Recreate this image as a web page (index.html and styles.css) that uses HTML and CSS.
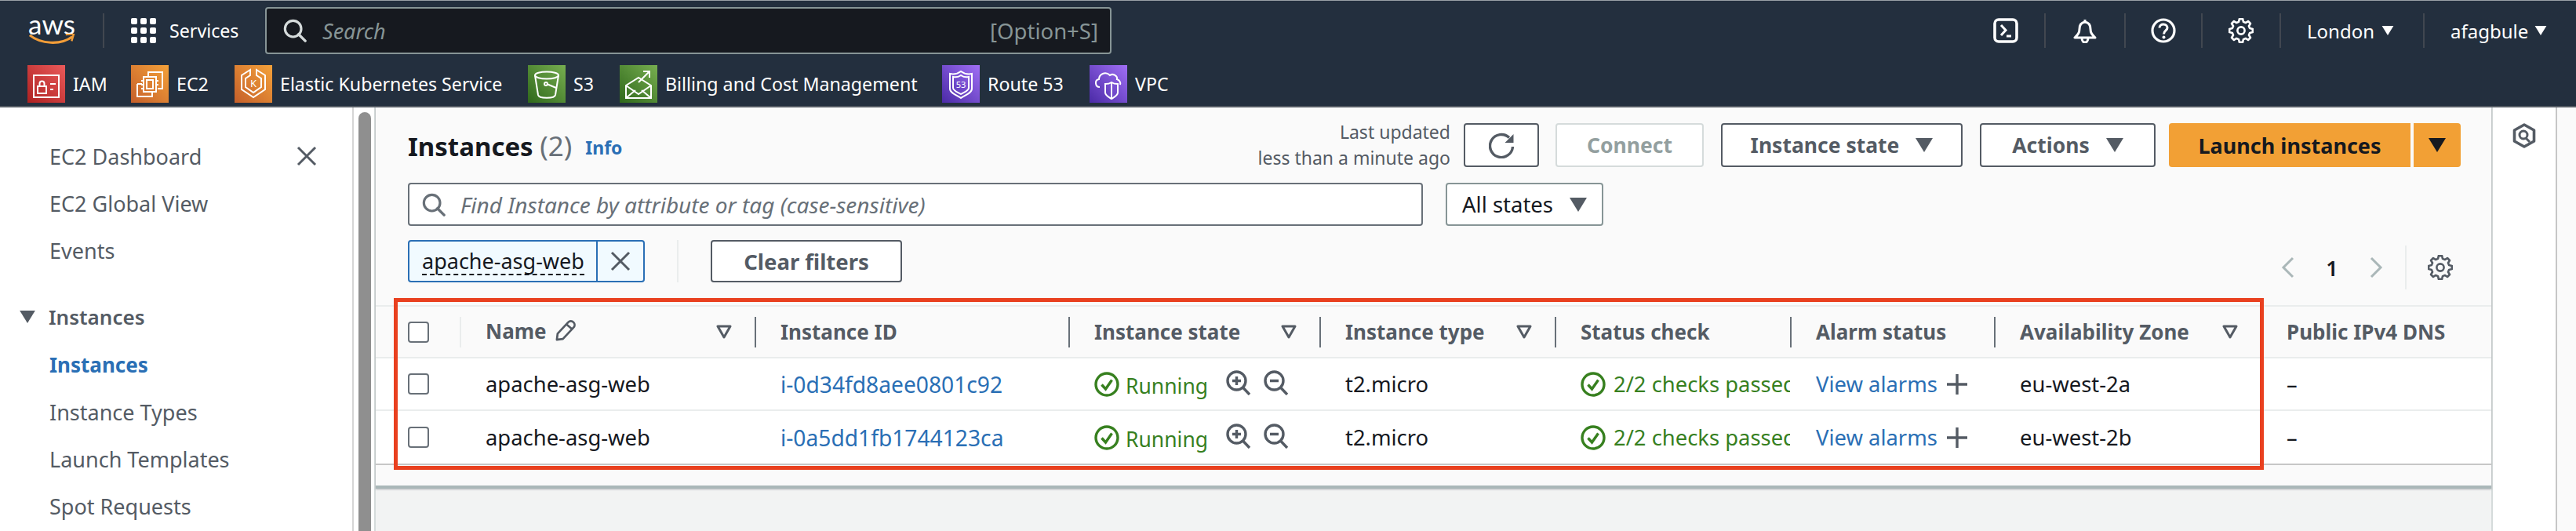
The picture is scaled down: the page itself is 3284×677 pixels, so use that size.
FILE: index.html
```html
<!DOCTYPE html>
<html lang="en">
<head>
<meta charset="utf-8">
<title>Instances | EC2</title>
<link rel="stylesheet" href="styles.css">
</head>
<body>
<svg class="sprite" aria-hidden="true">
  <symbol id="gear" viewBox="-16 -16 32 32"><polygon points="14.85,-2.1 14.85,2.1 11.1,3 9.96,5.75 11.98,9.03 9.03,11.98 5.75,9.96 3,11.1 2.1,14.85 -2.1,14.85 -3,11.1 -5.75,9.96 -9.03,11.98 -11.98,9.03 -9.96,5.75 -11.1,3 -14.85,2.1 -14.85,-2.1 -11.1,-3 -9.96,-5.75 -11.98,-9.03 -9.03,-11.98 -5.75,-9.96 -3,-11.1 -2.1,-14.85 2.1,-14.85 3,-11.1 5.75,-9.96 9.03,-11.98 11.98,-9.03 9.96,-5.75 11.1,-3" fill="none" stroke="currentColor" stroke-width="2.6" stroke-linejoin="round"/><circle r="4.6" fill="none" stroke="currentColor" stroke-width="2.6"/></symbol>
  <symbol id="caret" viewBox="0 0 16 13"><path d="M0 0H16L8 13Z" fill="currentColor"/></symbol>
  <symbol id="sort" viewBox="0 0 20 18"><path d="M2 2H18L10 16Z" fill="none" stroke="currentColor" stroke-width="3" stroke-linejoin="round"/></symbol>
  <symbol id="mag" viewBox="0 0 32 32"><circle cx="13.5" cy="13.5" r="11" fill="none" stroke="currentColor" stroke-width="3.4"/><path d="M21 21L30 30" stroke="currentColor" stroke-width="3.6" stroke-linecap="round"/></symbol>
  <symbol id="close" viewBox="0 0 26 26"><path d="M2 2L24 24M24 2L2 24" stroke="currentColor" stroke-width="3"/></symbol>
  <symbol id="check" viewBox="0 0 32 32"><circle cx="16" cy="16" r="14" fill="none" stroke="currentColor" stroke-width="3.4"/><path d="M9.5 16.5L14.5 22L22.5 10.5" fill="none" stroke="currentColor" stroke-width="3.4"/></symbol>
  <symbol id="zoomin" viewBox="0 0 32 32"><circle cx="13.5" cy="13.5" r="11.5" fill="none" stroke="currentColor" stroke-width="3.4"/><path d="M21.5 22L30 31M13.5 8V19M8 13.5H19" stroke="currentColor" stroke-width="3.4"/></symbol>
  <symbol id="zoomout" viewBox="0 0 32 32"><circle cx="13.5" cy="13.5" r="11.5" fill="none" stroke="currentColor" stroke-width="3.4"/><path d="M21.5 22L30 31M8 13.5H19" stroke="currentColor" stroke-width="3.4"/></symbol>
</svg>

<header class="topnav">
  <div class="nav-main">
    <div class="aws-logo"><span class="aws-word">aws</span><svg class="aws-smile" viewBox="0 0 62 16"><path d="M1 2C16 14 43 16 59 4" fill="none" stroke="#f29d38" stroke-width="3.400"/><path d="M50 1L61 0L58 10" fill="none" stroke="#f29d38" stroke-width="2.600"/></svg></div>
    <span class="nav-rule"></span>
    <div class="services">
      <div class="dots"><i></i><i></i><i></i><i></i><i></i><i></i><i></i><i></i><i></i></div>
      <span>Services</span>
    </div>
    <div class="global-search">
      <svg class="global-search-icon"><use href="#mag"/></svg>
      <span class="global-search-text">Search</span>
      <span class="shortcut">[Option+S]</span>
    </div>
    <div class="utilities">
      <div class="util"><svg class="util-icon" viewBox="0 0 32 32"><rect x="2" y="2" width="28" height="28" rx="5" fill="none" stroke="currentColor" stroke-width="3.6"/><path d="M10 9L16 15.5L10 22M17 23H23" fill="none" stroke="currentColor" stroke-width="3"/></svg></div>
      <div class="util"><svg class="util-icon" viewBox="0 0 32 32"><path d="M16 2C16 2 16 4 16 5C10 6 9 10 9 14C9 19 7 21 3 25H29C25 21 23 19 23 14C23 10 22 6 16 5M12 25C12 29 14 31 16 31C18 31 20 29 20 25" fill="none" stroke="currentColor" stroke-width="3" stroke-linejoin="round"/></svg></div>
      <div class="util"><svg class="util-icon" viewBox="0 0 32 32"><circle cx="16" cy="16" r="14" fill="none" stroke="currentColor" stroke-width="3.2"/><path d="M11 12.5C11 9.500 13.500 8 16 8C19 8 21 10 21 12.500C21 16 16.500 16 16.500 20.500" fill="none" stroke="currentColor" stroke-width="3"/><circle cx="16.500" cy="24.500" r="2" fill="currentColor"/></svg></div>
      <div class="util"><svg class="util-icon"><use href="#gear"/></svg></div>
      <div class="util util-text"><span class="util-label">London</span><svg class="util-caret"><use href="#caret"/></svg></div>
      <div class="util util-text util-last"><span class="util-label">afagbule</span><svg class="util-caret"><use href="#caret"/></svg></div>
    </div>
  </div>
  <nav class="favorites">
    <a class="fav"><svg class="fav-icon fav-red" viewBox="0 0 48 48"><g fill="none" stroke="#fff" stroke-width="2"><rect x="8" y="13" width="32" height="28"/><rect x="13" y="27" width="11" height="9"/><path d="M15.500 27V23.500C15.500 19.500 21.500 19.500 21.500 23.500V27M29 24H36M29 31H33"/></g></svg><span>IAM</span></a>
    <a class="fav"><svg class="fav-icon fav-orange" viewBox="0 0 48 48"><g fill="none" stroke="#fff" stroke-width="2"><path d="M22 15V9H40V30H34M8 24H14M27 34V40H8V24"/><rect x="16" y="15" width="16" height="19"/><path d="M20 19H28V30H20Z M13 20H16M13 25H16M13 30H16M32 20H35M32 25H35"/></g></svg><span>EC2</span></a>
    <a class="fav"><svg class="fav-icon fav-orange" viewBox="0 0 48 48"><g fill="none" stroke="#fff" stroke-width="2"><path d="M20 6L9 13V31L24 41L39 31V13L28 6V13L34 17V28L24 35L14 28V17L20 13Z"/><text x="24" y="28" text-anchor="middle" class="icon-label" fill="#fff" stroke="none">K</text></g></svg><span>Elastic Kubernetes Service</span></a>
    <a class="fav"><svg class="fav-icon fav-green" viewBox="0 0 48 48"><g fill="none" stroke="#fff" stroke-width="2"><ellipse cx="24" cy="13" rx="15" ry="4.500"/><path d="M9 13L13 38C14 43 34 43 35 38L39 13M24 24L36 29"/><circle cx="23" cy="24" r="2"/></g></svg><span>S3</span></a>
    <a class="fav"><svg class="fav-icon fav-green" viewBox="0 0 48 48"><g fill="none" stroke="#fff" stroke-width="2"><path d="M8 26V42H40V26L24 16ZM8 42L20 32M40 42L28 32M8 26L24 37L40 26M24 22L38 8M30 8H38V16"/></g></svg><span>Billing and Cost Management</span></a>
    <a class="fav"><svg class="fav-icon fav-purple" viewBox="0 0 48 48"><g fill="none" stroke="#fff" stroke-width="2"><path d="M24 8C20 11 15 12 10 11V30C10 36 20 39 24 42C28 39 38 36 38 30V11C33 12 28 11 24 8Z"/><path d="M24 13C21 15 18 16 14 15V29C14 33 21 35 24 37C27 35 34 33 34 29V15C30 16 27 15 24 13Z"/><text x="24" y="29" text-anchor="middle" class="icon-label icon-label-sm" fill="#fff" stroke="none">53</text></g></svg><span>Route 53</span></a>
    <a class="fav"><svg class="fav-icon fav-purple" viewBox="0 0 48 48"><g fill="none" stroke="#fff" stroke-width="2"><path d="M13 28C7 28 6 19 12 18C12 12 20 7 26 13C30 10 36 14 35 18C38 19 40 22 39 25"/><path d="M28 22C25 24 23 24 20 24V35C20 39 25 41 28 43C31 41 36 39 36 35V24C33 24 31 24 28 22ZM28 22V43"/></g></svg><span>VPC</span></a>
  </nav>
</header>

<div class="shell">
  <aside class="sidebar">
    <div class="side-item side-first"><span>EC2 Dashboard</span><svg class="side-close"><use href="#close"/></svg></div>
    <div class="side-item">EC2 Global View</div>
    <div class="side-item">Events</div>
    <div class="side-section"><svg class="side-caret"><use href="#caret"/></svg><span>Instances</span></div>
    <div class="side-item side-active">Instances</div>
    <div class="side-item">Instance Types</div>
    <div class="side-item">Launch Templates</div>
    <div class="side-item">Spot Requests</div>
  </aside>
  <div class="scrolltrack"><div class="scrollthumb"></div></div>

  <main class="main">
    <section class="panel">
      <div class="head-row">
        <h1 class="title">Instances <span class="count">(2)</span></h1>
        <a class="info">Info</a>
        <div class="updated">Last updated<br>less than a minute ago</div>
        <button class="btn btn-refresh" aria-label="Refresh"><svg class="refresh-icon" viewBox="0 0 32 33"><path d="M26 6.500A14.500 14.500 0 1 0 30.500 18" fill="none" stroke="currentColor" stroke-width="3.400"/><path d="M31.500 2V13H20.500Z" fill="currentColor"/></svg></button>
        <button class="btn btn-connect" disabled>Connect</button>
        <button class="btn btn-state">Instance state<svg class="btn-caret"><use href="#caret"/></svg></button>
        <button class="btn btn-actions">Actions<svg class="btn-caret"><use href="#caret"/></svg></button>
        <button class="btn-launch">Launch instances</button>
        <button class="btn-launch-drop" aria-label="More"><svg class="btn-caret"><use href="#caret"/></svg></button>
      </div>

      <div class="filter-row">
        <div class="filter-input">
          <svg class="filter-icon"><use href="#mag"/></svg>
          <span>Find Instance by attribute or tag (case-sensitive)</span>
        </div>
        <div class="states">All states<svg class="btn-caret"><use href="#caret"/></svg></div>
      </div>

      <div class="token-row">
        <div class="token">
          <span class="token-text"><span class="token-value">apache-asg-web</span></span>
          <span class="token-x"><svg class="token-close"><use href="#close"/></svg></span>
        </div>
        <span class="token-rule"></span>
        <button class="btn btn-clear">Clear filters</button>
        <div class="pager">
          <svg class="pager-arrow" viewBox="0 0 18 28"><path d="M15 2L3 14L15 26" fill="none" stroke="currentColor" stroke-width="3"/></svg>
          <span class="page-num">1</span>
          <svg class="pager-arrow" viewBox="0 0 18 28"><path d="M3 2L15 14L3 26" fill="none" stroke="currentColor" stroke-width="3"/></svg>
          <span class="pager-rule"></span>
          <svg class="pager-gear"><use href="#gear"/></svg>
        </div>
      </div>

      <div class="table">
        <div class="tr thead">
          <div class="cell cell-check"><span class="box"></span></div>
          <div class="th th-soft"><span class="th-name">Name<svg class="pencil" viewBox="0 0 28 28"><path d="M3 26L4 18L18 3C20 1 23 1 25 3C27 5 27 8 25 10L11 25ZM16 6L23 12" fill="none" stroke="currentColor" stroke-width="2.800" stroke-linejoin="round"/></svg></span><svg class="sort"><use href="#sort"/></svg></div>
          <div class="th"><span>Instance ID</span></div>
          <div class="th"><span>Instance state</span><svg class="sort"><use href="#sort"/></svg></div>
          <div class="th"><span>Instance type</span><svg class="sort"><use href="#sort"/></svg></div>
          <div class="th"><span>Status check</span></div>
          <div class="th"><span>Alarm status</span></div>
          <div class="th"><span>Availability Zone</span><svg class="sort"><use href="#sort"/></svg></div>
          <div class="th th-none"><span>Public IPv4 DNS</span></div>
        </div>
        <div class="tr tbody">
          <div class="cell cell-check"><span class="box"></span></div>
          <div class="cell">apache-asg-web</div>
          <div class="cell link cell-id">i-0d34fd8aee0801c92</div>
          <div class="cell ok"><svg class="ok-icon"><use href="#check"/></svg><span class="run-text">Running</span><svg class="zoom-icon zoom-first"><use href="#zoomin"/></svg><svg class="zoom-icon"><use href="#zoomout"/></svg></div>
          <div class="cell">t2.micro</div>
          <div class="cell ok"><svg class="ok-icon"><use href="#check"/></svg><span class="clip-text">2/2 checks passed</span></div>
          <div class="cell"><span class="link">View alarms</span><svg class="plus" viewBox="0 0 26 26"><path d="M13 0V26M0 13H26" stroke="currentColor" stroke-width="3.400"/></svg></div>
          <div class="cell">eu-west-2a</div>
          <div class="cell">–</div>
        </div>
        <div class="tr tbody tr-last">
          <div class="cell cell-check"><span class="box"></span></div>
          <div class="cell">apache-asg-web</div>
          <div class="cell link cell-id">i-0a5dd1fb1744123ca</div>
          <div class="cell ok"><svg class="ok-icon"><use href="#check"/></svg><span class="run-text">Running</span><svg class="zoom-icon zoom-first"><use href="#zoomin"/></svg><svg class="zoom-icon"><use href="#zoomout"/></svg></div>
          <div class="cell">t2.micro</div>
          <div class="cell ok"><svg class="ok-icon"><use href="#check"/></svg><span class="clip-text">2/2 checks passed</span></div>
          <div class="cell"><span class="link">View alarms</span><svg class="plus" viewBox="0 0 26 26"><path d="M13 0V26M0 13H26" stroke="currentColor" stroke-width="3.400"/></svg></div>
          <div class="cell">eu-west-2b</div>
          <div class="cell">–</div>
        </div>
      </div>
    </section>
    <div class="highlight"></div>
  </main>

  <aside class="rail">
    <svg class="rail-icon" viewBox="0 0 30 32"><path d="M15 2L27.500 9V23L15 30L2.500 23V9Z" fill="none" stroke="currentColor" stroke-width="3.600" stroke-linejoin="round"/><circle cx="14" cy="15" r="5" fill="none" stroke="currentColor" stroke-width="3"/><path d="M17 19L22 24" stroke="currentColor" stroke-width="3"/></svg>
  </aside>
  <div class="edge"></div>
</div>
</body>
</html>
```

FILE: styles.css
```css
* { box-sizing: border-box; }
html, body { margin: 0; padding: 0; }
body {
  width: 3284px;
  height: 677px;
  overflow: hidden;
  display: flex;
  flex-direction: column;
  font-family: "Noto Sans", "Liberation Sans", sans-serif;
  font-size: 27px;
  color: #16191f;
  background: #fff;
}
svg { display: block; flex: none; }
.sprite { position: absolute; width: 0; height: 0; }
button { font-family: inherit; cursor: pointer; padding: 0; }

/* Top navigation */
.topnav {
  height: 137px;
  flex: none;
  background: #232f3e;
  border-top: 1px solid #9aa0a6;
  border-bottom: 2px solid #545b64;
  color: #fff;
  padding-top: 8px;
}
.nav-main { display: flex; align-items: center; height: 60px; }
.aws-logo { width: 62px; height: 40px; margin-left: 35px; margin-top: -2px; display: flex; flex-direction: column; align-items: center; }
.aws-word { font-family: "Lato", sans-serif; font-size: 35px; line-height: 25px; height: 25px; color: #fff; }
.aws-smile { width: 62px; height: 15px; }
.nav-rule { width: 2px; height: 44px; background: #414750; margin-left: 34px; }
.services { display: flex; align-items: center; margin-left: 34px; font-size: 23.200px; width: 171px; }
.dots { display: grid; grid-template-columns: repeat(3, 8px); grid-auto-rows: 8px; gap: 4px; width: 32px; margin-right: 17px; }
.dots i { background: #fff; border-radius: 2px; }
.global-search {
  width: 1079px;
  height: 60px;
  display: flex;
  align-items: center;
  background: #16191f;
  border: 2px solid #879596;
  border-radius: 4px;
  padding: 0 15px 0 21px;
  color: #879596;
}
.global-search-icon { width: 30px; height: 30px; color: #d5dbdb; margin-right: 20px; }
.global-search-text { font-style: italic; font-size: 27px; }
.shortcut { margin-left: auto; font-size: 27.500px; }
.utilities {
  display: grid;
  grid-template-columns: 100px 102px 98px 100px 183px 193px;
  margin-left: auto;
  align-items: center;
}
.util { height: 44px; display: flex; align-items: center; justify-content: center; border-right: 2px solid #414750; }
.util-last { border-right: 0; }
.util-icon { width: 32px; height: 32px; color: #fff; }
.util-text { justify-content: flex-start; padding-left: 33px; font-size: 24px; }
.util-label { white-space: nowrap; }
.util-caret { width: 16px; height: 12px; color: #fff; }
.util-text .util-caret { margin-left: auto; margin-right: 37px; }

.favorites {
  display: grid;
  grid-template-columns: 132px 132px 374px 117px 411px 188px 200px;
  margin: 14px 0 0 35px;
  height: 48px;
}
.fav { display: flex; align-items: center; font-size: 23.200px; white-space: nowrap; }
.fav-icon { width: 48px; height: 48px; margin-right: 10px; }
.fav-red { background: linear-gradient(45deg, #ad2020, #ea5a5a); }
.fav-orange { background: linear-gradient(45deg, #c55f2a, #f4a23a); }
.fav-green { background: linear-gradient(45deg, #2f681b, #77ae50); }
.fav-purple { background: linear-gradient(45deg, #4a2aa6, #a06ff5); }
.icon-label { font-size: 13px; }
.icon-label-sm { font-size: 11px; }

/* Shell */
.shell { flex: 1; display: flex; min-height: 0; }
.sidebar {
  width: 451px;
  flex: none;
  background: #fff;
  border-right: 2px solid #d5d5d5;
  padding-top: 32px;
  color: #545b64;
}
.side-item { height: 60px; display: flex; align-items: center; padding-left: 63px; font-size: 27px; white-space: nowrap; }
.side-first { justify-content: space-between; padding-right: 45px; }
.side-close { width: 26px; height: 26px; color: #545b64; }
.side-section { display: flex; align-items: center; height: 62px; margin-top: 24px; padding-left: 25px; font-weight: 600; font-size: 26px; }
.side-caret { width: 20px; height: 16px; margin-right: 17px; color: #545b64; }
.side-active { color: #2a6fb5; font-weight: 700; font-size: 26px; }
.scrolltrack { width: 28px; flex: none; background: #fff; border-right: 2px solid #d5dbdb; padding: 6px 4px 0 6px; }
.scrollthumb { width: 16px; height: 100%; background: #8f8f8f; border-radius: 8px 8px 0 0; }

.main { width: 2697px; flex: none; position: relative; background: #f2f3f3; }
.panel { background: #fafafa; height: 486px; padding-top: 20px; border-bottom: 4px solid #aab7b8; box-shadow: 0 1px 2px rgba(84, 91, 100, .4); }

.head-row { display: flex; align-items: center; height: 56px; padding: 0 39px 0 41px; }
.title { margin: 0; font-size: 33px; font-weight: 700; color: #16191f; white-space: nowrap; }
.count { font-size: 35px; font-weight: 400; color: #687078; }
.info { margin-left: 17px; margin-top: 6px; font-size: 23px; font-weight: 700; color: #2a6fb5; }
.updated { margin-left: auto; margin-right: 17px; text-align: right; font-size: 23px; line-height: 33px; color: #545b64; white-space: nowrap; }
.btn {
  height: 56px;
  display: flex;
  align-items: center;
  justify-content: center;
  background: #fff;
  border: 2px solid #545b64;
  border-radius: 4px;
  color: #545b64;
  font-size: 26.500px;
  font-weight: 700;
}
.btn-caret { width: 22px; height: 18px; margin-left: 21px; color: currentColor; }
.btn-refresh { width: 96px; margin-right: 21px; }
.refresh-icon { width: 32px; height: 33px; }
.btn-connect { width: 189px; margin-right: 22px; border-color: #d5dbdb; color: #939f9f; }
.btn-state { width: 308px; margin-right: 22px; }
.btn-actions { width: 224px; margin-right: 17px; }
.btn-launch, .btn-launch-drop { height: 56px; border: 0; background: #f2a035; color: #16191f; font-size: 27px; font-weight: 700; }
.btn-launch { width: 308px; border-radius: 4px 0 0 4px; margin-right: 4px; }
.btn-launch-drop { width: 60px; border-radius: 0 4px 4px 0; display: flex; align-items: center; justify-content: center; }
.btn-launch-drop .btn-caret { margin: 0; }

.filter-row { display: flex; margin: 20px 0 0 41px; }
.filter-input {
  width: 1294px;
  height: 55px;
  display: flex;
  align-items: center;
  background: #fff;
  border: 2px solid #687078;
  border-radius: 4px;
  padding-left: 16px;
  color: #687078;
  font-style: italic;
  font-size: 28px;
}
.filter-icon { width: 30px; height: 30px; margin-right: 19px; color: #687078; }
.states {
  width: 201px;
  height: 55px;
  margin-left: 29px;
  display: flex;
  align-items: center;
  justify-content: center;
  background: #fff;
  border: 2px solid #879596;
  border-radius: 4px;
  color: #16191f;
  font-size: 27.500px;
}
.states .btn-caret { color: #545b64; }

.token-row { display: flex; align-items: center; height: 54px; margin: 18px 0 0 41px; }
.token { width: 302px; height: 54px; display: flex; background: #f1faff; border: 2px solid #2a6fb5; border-radius: 4px; }
.token-text { width: 240px; display: flex; align-items: center; padding-left: 16px; border-right: 2px solid #2a6fb5; font-size: 27px; }
.token-value { border-bottom: 2px dashed #16191f; line-height: 33px; white-space: nowrap; }
.token-x { flex: 1; display: flex; align-items: center; justify-content: center; }
.token-close { width: 26px; height: 26px; color: #545b64; }
.token-rule { width: 2px; height: 54px; background: #eaeded; margin-left: 41px; }
.btn-clear { width: 244px; height: 54px; margin-left: 41px; font-size: 27.500px; }
.pager { display: flex; align-items: center; margin: 16px 0 0 auto; padding-right: 49px; color: #aab7b8; }
.pager-arrow { width: 18px; height: 28px; }
.page-num { width: 94px; text-align: center; color: #16191f; font-size: 27px; font-weight: 600; }
.pager-rule { width: 2px; height: 56px; background: #eaeded; margin-left: 28px; margin-right: 27px; }
.pager-gear { width: 32px; height: 32px; color: #545b64; }

.table { margin-top: 29px; overflow: hidden; border-top: 2px solid #eaeded; }
.tr { display: grid; grid-template-columns: 107px 376px 400px 320px 300px 300px 260px 340px 294px; align-items: center; }
.thead { height: 66px; border-bottom: 2px solid #eaeded; background: #fafafa; color: #545b64; font-weight: 700; font-size: 26px; }
.tbody { height: 67px; border-bottom: 2px solid #eaeded; background: #fff; font-size: 27.400px; color: #16191f; }
.tr-last { height: 69px; border-bottom-color: #c6c6c6; }
.cell { display: flex; align-items: center; padding-left: 33px; white-space: nowrap; overflow: hidden; }
.cell-check { padding-left: 41px; }
.cell-id { font-size: 28.200px; }
.box { width: 27px; height: 27px; background: #fff; border: 2px solid #687078; border-radius: 4px; }
.th { height: 39px; display: flex; align-items: center; justify-content: space-between; padding: 0 29px 0 31px; border-left: 2px solid #687078; white-space: nowrap; }
.th-soft { border-left-color: #eaeded; }
.th-none { border-left: 0; padding-left: 33px; }
.th-name { display: flex; align-items: center; gap: 10px; margin-top: -3px; }
.pencil { width: 27px; height: 27px; }
.sort { width: 20px; height: 18px; }
.link { color: #2a6fb5; }
.ok { color: #37801f; }
.ok-icon { width: 32px; height: 32px; margin-right: 8px; }
.run-text { margin-top: 4px; width: 128px; font-size: 26.500px; }
.clip-text { margin-left: 2px; }
.zoom-icon { width: 32px; height: 32px; margin-left: 16px; margin-top: -3px; color: #545b64; }
.zoom-first { margin-left: 0; }
.plus { width: 26px; height: 26px; margin-left: 12px; color: #545b64; }

.highlight { position: absolute; left: 23px; top: 243px; width: 2384px; height: 219px; border: 5px solid #e9401f; }

.rail { width: 82px; flex: none; background: #fff; border-left: 2px solid #d5dbdb; padding: 20px 0 0 25px; color: #545b64; }
.rail-icon { width: 30px; height: 32px; }
.edge { flex: 1; background: #fafafa; border-left: 2px solid #c6c6c6; }
```
